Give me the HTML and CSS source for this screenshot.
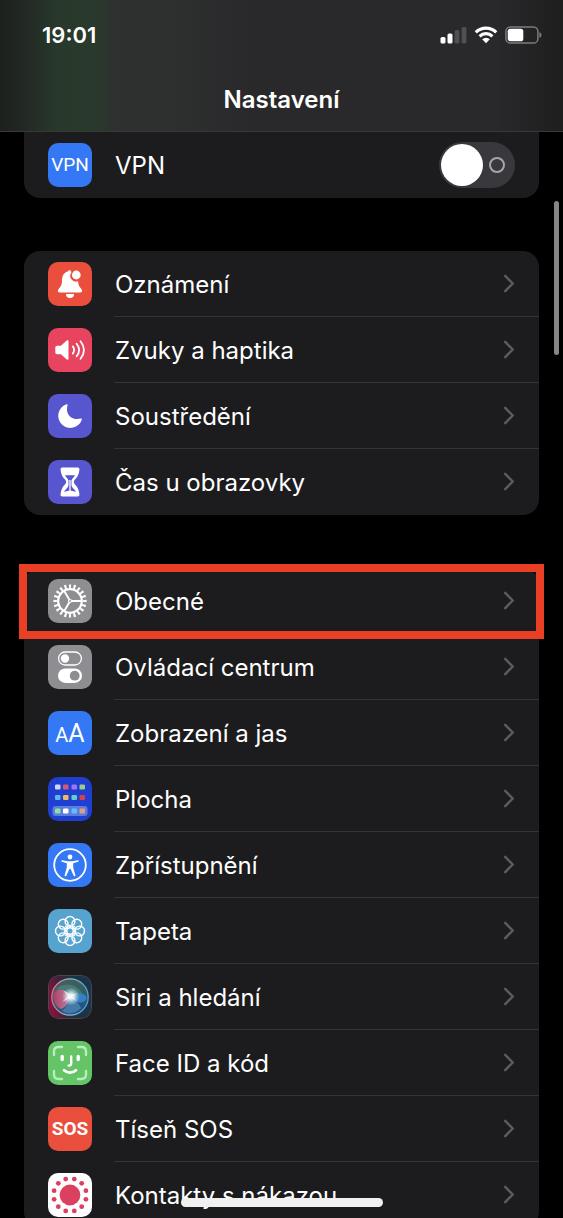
FILE: index.html
```html
<!DOCTYPE html>
<html lang="cs">
<head>
<meta charset="utf-8">
<meta name="viewport" content="width=device-width, initial-scale=1">
<title>Nastavení</title>
<link rel="stylesheet" href="styles.css">
</head>
<body>
<div class="screen">
  <header class="topbar">
    <div class="status">
      <time class="clock">19:01</time>
      <div class="indicators">
        <svg class="signal" width="27" height="18" viewBox="0 0 27 18" aria-hidden="true">
          <rect x="0.5" y="11" width="5" height="6.5" rx="1.6" fill="#fff"/>
          <rect x="7.5" y="7.5" width="5" height="10" rx="1.6" fill="#fff"/>
          <rect x="14.6" y="4" width="4.8" height="13.5" rx="1.6" fill="#505052"/>
          <rect x="21.6" y="1" width="4.8" height="16.5" rx="1.6" fill="#505052"/>
        </svg>
        <svg class="wifi" width="24" height="18" viewBox="0 0 24 18" aria-hidden="true">
          <g fill="none" stroke="#fff" stroke-width="3.2">
            <path d="M1.8 6.3a14.6 14.6 0 0 1 20.4 0"/>
            <path d="M5.6 10.3a9.1 9.1 0 0 1 12.8 0"/>
          </g>
          <path d="M8.2 13.3a5.5 5.5 0 0 1 7.6 0L12 17.2z" fill="#fff"/>
        </svg>
        <svg class="battery" width="37" height="18" viewBox="0 0 37 18" aria-hidden="true">
          <rect x="0.9" y="0.9" width="32" height="16.2" rx="4.4" fill="none" stroke="#7c7c7e" stroke-width="1.5"/>
          <rect x="2.7" y="2.7" width="15.6" height="12.6" rx="2.6" fill="#fff"/>
          <path d="M34.4 6.2c1.600.4 2 1.500 2 2.800s-.4 2.400-2 2.800z" fill="#7c7c7e"/>
        </svg>
      </div>
    </div>
    <h1 class="title">Nastavení</h1>
  </header>

  <main class="content">
    <section class="group group-cut">
      <div class="row">
        <span class="icon blue icon-vpn" aria-hidden="true">VPN</span>
        <div class="cell">
          <label class="label" for="vpn">VPN</label>
          <input class="switch" id="vpn" type="checkbox" role="switch">
        </div>
      </div>
    </section>

    <nav class="group">
      <a class="row" href="#oznameni">
        <svg class="icon red" viewBox="0 0 44 44" aria-hidden="true">
          <path d="M22 8.200c-1 0-1.800.3-2.300 1.400-3.800 1-5.500 4.200-5.700 8.400-.2 5-1.100 6.700-3 8.500-1.600 1.600-1.600 3.900.6 3.900h20.800c2.200 0 2.200-2.300.6-3.900-1.800-1.800-2.700-3.300-2.900-7.200a5.800 5.800 0 0 1-6.700-8.900c-.3-1.500-.6-2.200-1.400-2.200z" fill="#fff"/>
          <path d="M18 32h8a4 4 0 0 1-8 0z" fill="#fff"/>
          <circle cx="28.300" cy="13" r="4.400" fill="#fff"/>
        </svg>
        <span class="cell"><span class="label">Oznámení</span><svg class="chevron" viewBox="0 0 12 20"><path d="M2 2l8 8-8 8"/></svg></span>
      </a>
      <a class="row" href="#zvuky">
        <svg class="icon pink" viewBox="0 0 44 44" aria-hidden="true">
          <path d="M9.300 17.700h3.600l5.600-5c.9-.8 2-.4 2 .8v17c0 1.200-1.100 1.600-2 .8l-5.600-5H9.300c-1.400 0-2-.7-2-2v-4.600c0-1.300.6-2 2-2z" fill="#fff"/>
          <g fill="none" stroke="#fff" stroke-width="1.800" stroke-linecap="round">
            <path d="M24.800 18.400c1.700 2.300 1.700 4.900 0 7.200"/>
            <path d="M28.600 15.700c3.200 4 3.200 8.600 0 12.600"/>
            <path d="M32.500 13.200c4.500 5.700 4.500 11.900 0 17.600"/>
          </g>
        </svg>
        <span class="cell"><span class="label">Zvuky a haptika</span><svg class="chevron" viewBox="0 0 12 20"><path d="M2 2l8 8-8 8"/></svg></span>
      </a>
      <a class="row" href="#soustredeni">
        <svg class="icon indigo" viewBox="0 0 44 44" aria-hidden="true">
          <path d="M18.600 10.300c.7-.3 1.300.2 1 1-2.800 8.300 3.500 15.700 13.200 13.300.8-.2 1.300.4 1 1.100A12.100 12.100 0 1 1 18.600 10.300z" fill="#fff"/>
        </svg>
        <span class="cell"><span class="label">Soustředění</span><svg class="chevron" viewBox="0 0 12 20"><path d="M2 2l8 8-8 8"/></svg></span>
      </a>
      <a class="row" href="#cas">
        <svg class="icon indigo" viewBox="0 0 44 44" aria-hidden="true">
          <path d="M14.300 7.600h15.400c1.200 0 1.900.8 1.700 2-.4 5.300-2.400 8-4.600 10.200-1.300 1.400-1.300 3 0 4.400 2.200 2.200 4.200 4.900 4.600 10.200.2 1.200-.5 2-1.700 2H14.300c-1.200 0-1.900-.8-1.700-2 .4-5.300 2.400-8 4.600-10.200 1.300-1.400 1.300-3 0-4.400-2.200-2.200-4.200-4.900-4.600-10.200-.2-1.200.5-2 1.700-2z" fill="#fff"/>
          <path d="M17 15.300h10c-.7 1.500-2.900 3.200-3.500 5v5.200c.5 2.800 3.600 4 4.400 6.600-2-.5-4-1.500-5.900-1.500s-3.900 1-5.900 1.500c.8-2.600 3.900-3.800 4.400-6.600v-5.200c-.6-1.800-2.800-3.500-3.500-5z" fill="#5856ce"/>
          <path d="M22 20v11" stroke="#fff" stroke-width="1.300"/>
        </svg>
        <span class="cell"><span class="label">Čas u obrazovky</span><svg class="chevron" viewBox="0 0 12 20"><path d="M2 2l8 8-8 8"/></svg></span>
      </a>
    </nav>

    <nav class="group">
      <a class="row marked" href="#obecne">
        <svg class="icon gray" viewBox="0 0 44 44" aria-hidden="true">
          <g fill="none" stroke="#fff">
            <circle cx="22" cy="22" r="11.800" stroke-width="2.200"/>
            <circle cx="22" cy="22" r="14.600" stroke-width="4" pathLength="220" stroke-dasharray="5 6" stroke-dashoffset="2.500"/>
            <path d="M23 22h11M21.500 21.100l-5.500-9.500M21.500 22.900l-5.500 9.500" stroke-width="1.900"/>
            <circle cx="22" cy="22" r="1.500" stroke-width="1.200"/>
          </g>
        </svg>
        <span class="cell"><span class="label">Obecné</span><svg class="chevron" viewBox="0 0 12 20"><path d="M2 2l8 8-8 8"/></svg></span>
      </a>
      <a class="row" href="#centrum">
        <svg class="icon gray" viewBox="0 0 44 44" aria-hidden="true">
          <rect x="10.600" y="7" width="22.800" height="13" rx="6.500" fill="none" stroke="#fff" stroke-width="1.300"/>
          <circle cx="17" cy="13.500" r="4.200" fill="#fff"/>
          <rect x="10" y="23.400" width="24" height="14.600" rx="7.300" fill="#fff"/>
          <circle cx="26.700" cy="30.700" r="4.900" fill="#8e8d92"/>
        </svg>
        <span class="cell"><span class="label">Ovládací centrum</span><svg class="chevron" viewBox="0 0 12 20"><path d="M2 2l8 8-8 8"/></svg></span>
      </a>
      <a class="row" href="#zobrazeni">
        <span class="icon blue icon-aa" aria-hidden="true"><small>A</small>A</span>
        <span class="cell"><span class="label">Zobrazení a jas</span><svg class="chevron" viewBox="0 0 12 20"><path d="M2 2l8 8-8 8"/></svg></span>
      </a>
      <a class="row" href="#plocha">
        <svg class="icon navy" viewBox="0 0 44 44" aria-hidden="true">
          <rect x="4.500" y="29" width="35" height="10" rx="3" fill="#5d7be0"/>
          <g>
            <rect x="7" y="7.500" width="5.500" height="5" rx="1.200" fill="#d3d6f3"/>
            <rect x="15" y="7.500" width="5.500" height="5" rx="1.200" fill="#d6567f"/>
            <rect x="23.500" y="7.500" width="5.500" height="5" rx="1.200" fill="#a671f6"/>
            <rect x="31.500" y="7.500" width="5.500" height="5" rx="1.200" fill="#9fce83"/>
            <rect x="7" y="18" width="5.500" height="5" rx="1.200" fill="#5db6f5"/>
            <rect x="15" y="18" width="5.500" height="5" rx="1.200" fill="#efb868"/>
            <rect x="23.500" y="18" width="5.500" height="5" rx="1.200" fill="#67cdc5"/>
            <rect x="31.500" y="18" width="5.500" height="5" rx="1.200" fill="#cf4450"/>
            <rect x="7" y="31.500" width="5.500" height="5" rx="1.200" fill="#86e59a"/>
            <rect x="15" y="31.500" width="5.500" height="5" rx="1.200" fill="#fff"/>
            <rect x="23.500" y="31.500" width="5.500" height="5" rx="1.200" fill="#5fc2fa"/>
            <rect x="31.500" y="31.500" width="5.500" height="5" rx="1.200" fill="#dda07c"/>
          </g>
        </svg>
        <span class="cell"><span class="label">Plocha</span><svg class="chevron" viewBox="0 0 12 20"><path d="M2 2l8 8-8 8"/></svg></span>
      </a>
      <a class="row" href="#zpristupneni">
        <svg class="icon blue" viewBox="0 0 44 44" aria-hidden="true">
          <circle cx="22" cy="22" r="15.800" fill="none" stroke="#fff" stroke-width="1.800"/>
          <circle cx="22" cy="14" r="2.400" fill="#fff"/>
          <path d="M14.200 17.200l5.300 1h5l5.300-1c1.200-.1 1.300 1.300.3 1.600l-4.900 1.500v4.200l2.200 7.700c.3 1.200-1.200 1.600-1.700.5L22.600 26h-1.200l-3.100 6.700c-.5 1.100-2 .7-1.700-.5l2.200-7.700v-4.200l-4.900-1.500c-1-.3-.9-1.700.3-1.600z" fill="#fff"/>
        </svg>
        <span class="cell"><span class="label">Zpřístupnění</span><svg class="chevron" viewBox="0 0 12 20"><path d="M2 2l8 8-8 8"/></svg></span>
      </a>
      <a class="row" href="#tapeta">
        <svg class="icon sky" viewBox="0 0 44 44" aria-hidden="true">
          <g fill="none" stroke="#fff" stroke-width="1.400">
            <circle cx="22" cy="12.400" r="4.900"/>
            <circle cx="28.800" cy="15.200" r="4.900"/>
            <circle cx="31.600" cy="22" r="4.900"/>
            <circle cx="28.800" cy="28.800" r="4.900"/>
            <circle cx="22" cy="31.600" r="4.900"/>
            <circle cx="15.200" cy="28.800" r="4.900"/>
            <circle cx="12.400" cy="22" r="4.900"/>
            <circle cx="15.200" cy="15.200" r="4.900"/>
            <circle cx="22" cy="22" r="3.200"/>
            <path d="M22 18.800v-3M22 25.200v3M18.800 22h-3M25.200 22h3M19.700 19.700l-2.600-2.600M24.300 19.700l2.600-2.600M19.700 24.300l-2.600 2.600M24.300 24.300l2.600 2.600"/>
          </g>
        </svg>
        <span class="cell"><span class="label">Tapeta</span><svg class="chevron" viewBox="0 0 12 20"><path d="M2 2l8 8-8 8"/></svg></span>
      </a>
      <a class="row" href="#siri">
        <svg class="icon" viewBox="0 0 44 44" aria-hidden="true">
          <defs>
            <linearGradient id="siri-back" x1="0" y1="0.600" x2="1" y2="0.400">
              <stop offset="0" stop-color="#8a1240"/><stop offset="0.300" stop-color="#45203c"/><stop offset="0.600" stop-color="#1d3340"/><stop offset="1" stop-color="#1c3350"/>
            </linearGradient>
            <linearGradient id="siri-ball" x1="0.300" y1="0" x2="0.700" y2="1">
              <stop offset="0" stop-color="#4d5a5c"/><stop offset="0.450" stop-color="#2f6064"/><stop offset="1" stop-color="#1c4f92"/>
            </linearGradient>
            <linearGradient id="siri-ring" x1="0" y1="0" x2="1" y2="0">
              <stop offset="0" stop-color="#e0708e"/><stop offset="0.500" stop-color="#7cc5bd"/><stop offset="1" stop-color="#5a9fc8"/>
            </linearGradient>
            <radialGradient id="siri-glow">
              <stop offset="0" stop-color="#fff"/><stop offset="0.300" stop-color="#fff" stop-opacity="0.850"/><stop offset="1" stop-color="#bfe8ff" stop-opacity="0"/>
            </radialGradient>
            <linearGradient id="siri-rose" x1="0" y1="0" x2="1" y2="0">
              <stop offset="0" stop-color="#c83a6a"/><stop offset="1" stop-color="#e58cae"/>
            </linearGradient>
          </defs>
          <rect x="0.500" y="0.500" width="43" height="43" rx="10" fill="url(#siri-back)" stroke="#46464c"/>
          <circle cx="22" cy="22" r="18.200" fill="url(#siri-ball)" stroke="url(#siri-ring)" stroke-width="1.300"/>
          <path d="M8 14c9-8 22-5 27 6-8-2-10 0-13 2-3-4-8-6-14-8z" fill="#5d9a8f" opacity="0.450"/>
          <path d="M6 17c5-4 11-3 16 4-1 7-5 12-9 13-6-3-9-9-7-17z" fill="url(#siri-rose)" opacity="0.800"/>
          <ellipse cx="32" cy="23" rx="6.500" ry="4.500" fill="#3a86d0" opacity="0.850"/>
          <path d="M20 24c5 0 11 3 13 9-5 6-13 7-19 3 4-3 6-7 6-12z" fill="#5d93c4" opacity="0.600"/>
          <circle cx="23" cy="21.500" r="9" fill="url(#siri-glow)"/>
          <path d="M15 15l8 5 7-2-6 4 5 4-7-3-8 4 6-6z" fill="#fff" opacity="0.600"/>
        </svg>
        <span class="cell"><span class="label">Siri a hledání</span><svg class="chevron" viewBox="0 0 12 20"><path d="M2 2l8 8-8 8"/></svg></span>
      </a>
      <a class="row" href="#faceid">
        <svg class="icon green" viewBox="0 0 44 44" aria-hidden="true">
          <g fill="none" stroke="#b9ecbf" stroke-width="2.400" stroke-linecap="round">
            <path d="M6 14V10.500C6 7.500 7.500 6 10.500 6H14M30 6h3.500C36.500 6 38 7.500 38 10.500V14M38 30v3.500c0 3-1.500 4.500-4.500 4.500H30M14 38h-3.500C7.500 38 6 36.500 6 33.500V30"/>
          </g>
          <g fill="none" stroke="#fff" stroke-width="2.700" stroke-linecap="round">
            <path d="M14.200 15.500v3M30.200 15.500v3" stroke-width="3.400"/>
            <path d="M23.200 15.500v6.700c0 1.600-.7 2.400-2.600 2.400" stroke-width="2.400"/>
            <path d="M16 29.300c3.400 3.100 8.600 3.100 12 0"/>
          </g>
        </svg>
        <span class="cell"><span class="label">Face ID a kód</span><svg class="chevron" viewBox="0 0 12 20"><path d="M2 2l8 8-8 8"/></svg></span>
      </a>
      <a class="row" href="#sos">
        <span class="icon red icon-sos" aria-hidden="true">SOS</span>
        <span class="cell"><span class="label">Tíseň SOS</span><svg class="chevron" viewBox="0 0 12 20"><path d="M2 2l8 8-8 8"/></svg></span>
      </a>
      <a class="row" href="#kontakty">
        <svg class="icon white" viewBox="0 0 44 44" aria-hidden="true">
          <g fill="#dc4060">
            <circle cx="22" cy="22" r="10.400"/>
            <circle cx="37.900" cy="26.300" r="2.400"/><circle cx="33.700" cy="33.700" r="2.400"/>
            <circle cx="26.300" cy="37.900" r="2.400"/><circle cx="17.700" cy="37.900" r="2.400"/>
            <circle cx="10.300" cy="33.700" r="2.400"/><circle cx="6.100" cy="26.300" r="2.400"/>
            <circle cx="6.100" cy="17.700" r="2.400"/><circle cx="10.300" cy="10.300" r="2.400"/>
            <circle cx="17.700" cy="6.100" r="2.400"/><circle cx="26.300" cy="6.100" r="2.400"/>
            <circle cx="33.700" cy="10.300" r="2.400"/><circle cx="37.900" cy="17.700" r="2.400"/>
          </g>
        </svg>
        <span class="cell"><span class="label">Kontakty s nákazou</span><svg class="chevron" viewBox="0 0 12 20"><path d="M2 2l8 8-8 8"/></svg></span>
      </a>
    </nav>
  </main>
  <div class="scroll-thumb"></div>
  <div class="home-bar"></div>
</div>
</body>
</html>
```

FILE: styles.css
```css
* {
  box-sizing: border-box;
}

body {
  margin: 0;
  background: #000;
  color: #fff;
  font-family: Inter, Roboto, "Liberation Sans", sans-serif;
  font-size: 24px;
  line-height: 32px;
}

.screen {
  position: relative;
  display: flex;
  flex-direction: column;
  height: 100vh;
  overflow: hidden;
}

.topbar {
  flex: none;
  padding: 19px 21px 15px 42px;
  border-bottom: 1px solid #38383a;
  background: linear-gradient(90deg, #1d201e 0%, #222823 4%, #28382b 10%, #293a2c 16%, #2e302f 21%, #2e2f2f 30%, #29292b 45%, #29292b 88%, #1e1e1f 100%);
}

.status {
  display: flex;
  align-items: center;
  justify-content: space-between;
}

.clock {
  font-size: 22px;
  font-weight: 600;
}

.indicators {
  display: flex;
  align-items: center;
  gap: 7px;
}

.title {
  margin: 33px 21px 0 0;
  text-align: center;
  font-size: 24px;
  font-weight: 600;
}

.content {
  display: flex;
  flex: 1;
  flex-direction: column;
  gap: 53px;
  min-height: 0;
  padding: 0 24px;
}

.group {
  flex: none;
  border-radius: 16px;
  background: #1c1c1e;
}

.group-cut {
  border-top-left-radius: 0;
  border-top-right-radius: 0;
}

.row {
  position: relative;
  display: flex;
  align-items: center;
  gap: 22px;
  padding-left: 24px;
  color: inherit;
  text-decoration: none;
}

.cell {
  display: flex;
  flex: 1;
  align-items: center;
  justify-content: space-between;
  height: 66px;
  padding-right: 24px;
  border-bottom: 1px solid #343437;
}

.row:last-child .cell {
  border-bottom-color: transparent;
}

.label {
  padding: 3px 0 0 1px;
}

.chevron {
  width: 12px;
  height: 19px;
  fill: none;
  stroke: #5b5b60;
  stroke-width: 2.6;
  stroke-linecap: round;
  stroke-linejoin: round;
}

.icon {
  display: flex;
  flex: none;
  align-items: center;
  justify-content: center;
  width: 44px;
  height: 44px;
  border-radius: 10px;
}

.blue { background: #3478f6; }
.red { background: #ea4e3d; }
.pink { background: #e8435f; }
.indigo { background: #5856ce; }
.gray { background: #8e8d92; }
.navy { background: #1f3fd0; }
.sky { background: #56a3cf; }
.green { background: #64c466; }
.white { background: #fff; }

.icon-vpn {
  font-family: Roboto, sans-serif;
  font-size: 19px;
}

.icon-aa {
  align-items: baseline;
  font-family: Roboto, sans-serif;
  font-size: 25px;
  line-height: 46px;
}

.icon-aa small {
  font-size: 20px;
}

.icon-sos {
  font-family: Roboto, sans-serif;
  font-size: 19px;
  font-weight: 700;
}

.switch {
  display: flex;
  align-items: center;
  justify-content: space-between;
  width: 76px;
  height: 46px;
  margin: 0;
  padding: 0 10px 0 2px;
  border-radius: 23px;
  background: #39393d;
  appearance: none;
}

.switch::before {
  width: 42px;
  height: 42px;
  border-radius: 50%;
  background: #fff;
  content: "";
}

.switch::after {
  box-sizing: border-box;
  width: 16px;
  height: 16px;
  border: 2px solid #a6a6aa;
  border-radius: 50%;
  content: "";
}

.marked::after {
  position: absolute;
  inset: -4px -5px -5px;
  border: 8px solid #e94025;
  content: "";
}

.scroll-thumb {
  position: absolute;
  top: 201px;
  right: 4px;
  width: 5px;
  height: 154px;
  border-radius: 3px;
  background: #868686;
}

.home-bar {
  position: absolute;
  bottom: 11px;
  left: 50%;
  width: 202px;
  height: 9px;
  margin-left: -101px;
  border-radius: 5px;
  background: #f0f0f0;
}
```
